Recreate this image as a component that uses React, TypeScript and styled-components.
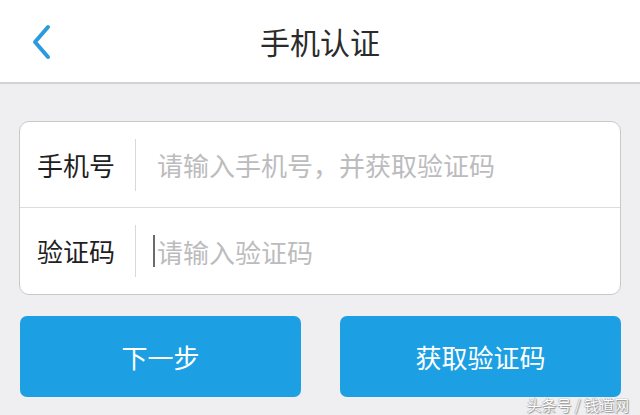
import React from "react";
import styled, { createGlobalStyle } from "styled-components";

const GlobalStyle = createGlobalStyle`
  html, body {
    margin: 0;
    padding: 0;
    background: #efeff1;
  }
  body {
    font-family: "Noto Sans CJK SC", "Noto Sans", sans-serif;
  }
  * { box-sizing: border-box; }
`;

const Page = styled.div`
  position: relative;
  width: 640px;
  height: 415px;
  overflow: hidden;
  background: #efeff1;
`;

const Header = styled.header`
  height: 84px;
  background: #ffffff;
  border-bottom: 2px solid #d2d2d4;
  display: grid;
  grid-template-columns: 1fr auto 1fr;
  align-items: center;
`;

const BackButton = styled.button`
  justify-self: start;
  margin-left: 26px;
  margin-top: 1px;
  width: 30px;
  height: 40px;
  padding: 0;
  border: 0;
  background: transparent;
  display: flex;
  align-items: center;
  justify-content: center;
`;

const Title = styled.h1`
  margin: 0;
  font-size: 30px;
  font-weight: 400;
  color: #2b2b2b;
  line-height: 1;
  letter-spacing: 0;
`;

const Main = styled.main`
  padding: 37px 19px 0 19px;
`;

const Card = styled.div`
  background: #ffffff;
  border: 1px solid #c9c9cb;
  border-radius: 10px;
  overflow: hidden;
`;

const Row = styled.div<{ $last?: boolean }>`
  height: ${(p) => (p.$last ? "86px" : "86px")};
  display: flex;
  align-items: center;
  border-bottom: ${(p) => (p.$last ? "none" : "1px solid #dcdcde")};
`;

const Label = styled.span`
  width: 115px;
  padding-left: 17px;
  font-size: 26px;
  color: #1f1f1f;
  line-height: 1;
  flex: none;
`;

const Divider = styled.span`
  width: 1px;
  height: 52px;
  background: #d9d9db;
  flex: none;
`;

const Field = styled.div`
  flex: 1;
  display: flex;
  align-items: center;
  padding-left: 21px;
  height: 100%;
`;

const Caret = styled.span`
  width: 2px;
  height: 32px;
  background: #6b6b6b;
  margin-left: -4px;
  margin-right: 2px;
  flex: none;
`;

const Input = styled.input`
  flex: 1;
  border: 0;
  outline: none;
  padding: 0;
  background: transparent;
  font-family: "Noto Sans CJK SC", "Noto Sans", sans-serif;
  font-size: 26px;
  color: #333;
  &::placeholder {
    color: #bcbcbe;
  }
`;

const Actions = styled.div`
  display: grid;
  grid-template-columns: 281px 281px;
  column-gap: 39px;
  margin-top: 21px;
  padding-left: 1px;
`;

const PrimaryButton = styled.button`
  height: 81px;
  border: 0;
  border-radius: 7px;
  background: #1c9fe3;
  color: #ffffff;
  font-family: "Noto Sans CJK SC", "Noto Sans", sans-serif;
  font-size: 26px;
  font-weight: 400;
  padding: 0;
`;

const Watermark = styled.span`
  position: absolute;
  right: 11px;
  bottom: 3px;
  font-size: 15px;
  color: #ffffff;
  line-height: 1;
  text-shadow: 0 0 1px #8a8a8a, 0 0 1px #8a8a8a, 1px 1px 1px #9a9a9a;
  letter-spacing: 0;
`;

function BackIcon() {
  return (
    <svg width="22" height="36" viewBox="0 0 22 36">
      <path
        d="M18 3 L5 18 L18 33"
        fill="none"
        stroke="#2c9ade"
        strokeWidth="4"
        strokeLinecap="round"
        strokeLinejoin="round"
      />
    </svg>
  );
}

export default function App() {
  return (
    <>
      <GlobalStyle />
      <Page>
        <Header>
          <BackButton aria-label="返回">
            <BackIcon />
          </BackButton>
          <Title>手机认证</Title>
          <span />
        </Header>
        <Main>
          <Card>
            <Row>
              <Label>手机号</Label>
              <Divider />
              <Field>
                <Input placeholder="请输入手机号，并获取验证码" />
              </Field>
            </Row>
            <Row $last>
              <Label>验证码</Label>
              <Divider />
              <Field>
                <Caret />
                <Input placeholder="请输入验证码" />
              </Field>
            </Row>
          </Card>
          <Actions>
            <PrimaryButton>下一步</PrimaryButton>
            <PrimaryButton>获取验证码</PrimaryButton>
          </Actions>
        </Main>
        <Watermark>头条号 / 钱道网</Watermark>
      </Page>
    </>
  );
}
